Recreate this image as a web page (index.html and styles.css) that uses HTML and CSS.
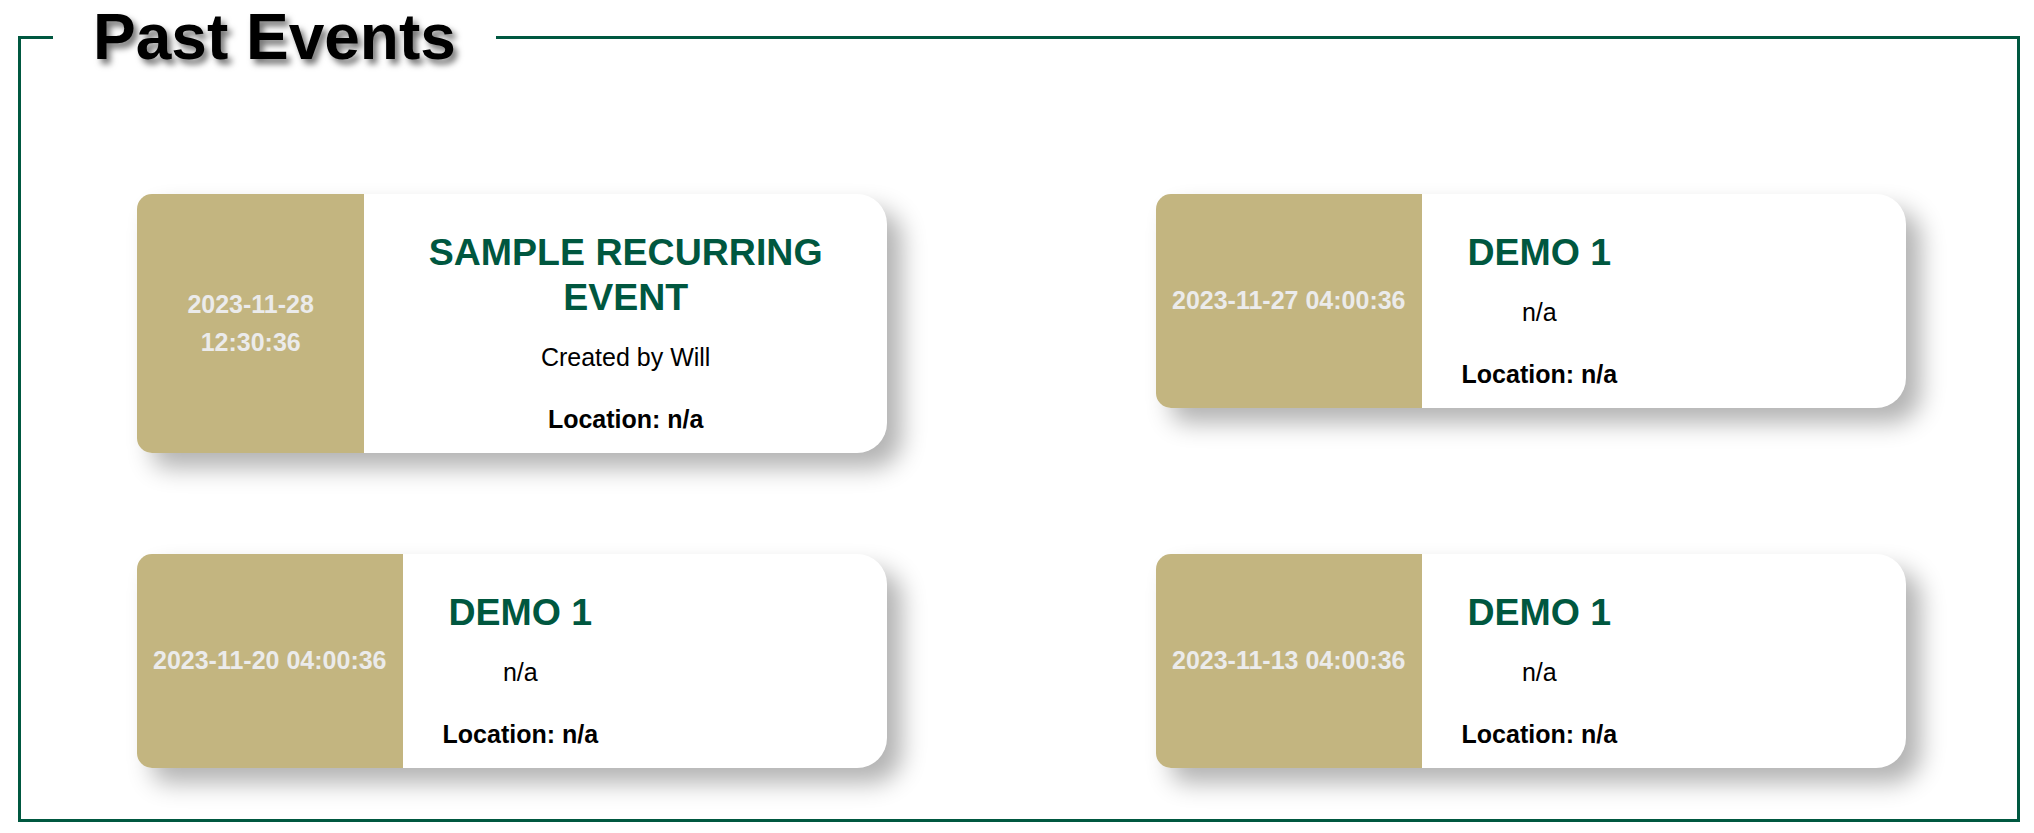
FILE: index.html
```html
<!DOCTYPE html>
<html lang="en">
<head>
<meta charset="utf-8">
<title>Past Events</title>
<link rel="stylesheet" href="styles.css">
</head>
<body>
<fieldset class="events">
  <legend class="events-title">Past Events</legend>
  <div class="event-grid">
    <article class="event-card">
      <div class="event-date">2023-11-28 12:30:36</div>
      <div class="event-info">
        <h2 class="event-name">SAMPLE RECURRING EVENT</h2>
        <p class="event-desc">Created by Will</p>
        <p class="event-loc">Location: n/a</p>
      </div>
    </article>
    <article class="event-card">
      <div class="event-date">2023-11-27 04:00:36</div>
      <div class="event-info">
        <h2 class="event-name">DEMO 1</h2>
        <p class="event-desc">n/a</p>
        <p class="event-loc">Location: n/a</p>
      </div>
    </article>
    <article class="event-card">
      <div class="event-date">2023-11-20 04:00:36</div>
      <div class="event-info">
        <h2 class="event-name">DEMO 1</h2>
        <p class="event-desc">n/a</p>
        <p class="event-loc">Location: n/a</p>
      </div>
    </article>
    <article class="event-card">
      <div class="event-date">2023-11-13 04:00:36</div>
      <div class="event-info">
        <h2 class="event-name">DEMO 1</h2>
        <p class="event-desc">n/a</p>
        <p class="event-loc">Location: n/a</p>
      </div>
    </article>
  </div>
</fieldset>
</body>
</html>
```
FILE: styles.css
```css
html, body {
  margin: 0;
  padding: 0;
  background: #ffffff;
}

body {
  font-family: "Liberation Sans", Arial, sans-serif;
  color: #000000;
}

.events {
  margin: 0 14px 11px 18px;
  padding: 0 0 51px 0;
  border: 3px solid #005840;
  min-width: 0;
}

.events-title {
  margin-left: 32px;
  padding: 0 40px;
  font-size: 64px;
  font-weight: bold;
  color: #000000;
  text-shadow: 4px 5px 6px rgba(0, 0, 0, 0.55);
}

.event-grid {
  display: grid;
  grid-template-columns: 750px 750px;
  column-gap: 269px;
  row-gap: 101px;
  align-items: start;
  padding: 120px 0 0 116px;
}

.event-card {
  display: flex;
  width: 750px;
  background: #ffffff;
  border-radius: 15px 30px 30px 15px;
  overflow: hidden;
  box-shadow: 15px 15px 25px rgba(0, 0, 0, 0.3);
}

.event-date {
  flex: 0 1 auto;
  display: flex;
  align-items: center;
  justify-content: center;
  padding: 0 16px;
  background: #c3b580;
  color: #ebebeb;
  font-size: 25px;
  font-weight: bold;
  line-height: 37.5px;
  text-align: center;
}

.event-info {
  flex: 0 1 auto;
  padding: 36px 40px 19px;
  text-align: center;
}

.event-name {
  margin: 0 0 23px;
  font-size: 37.5px;
  line-height: 45px;
  font-weight: bold;
  color: #00573f;
}

.event-desc {
  margin: 0 0 33px;
  font-size: 25px;
}

.event-loc {
  margin: 0;
  font-size: 25px;
  font-weight: bold;
}
```
